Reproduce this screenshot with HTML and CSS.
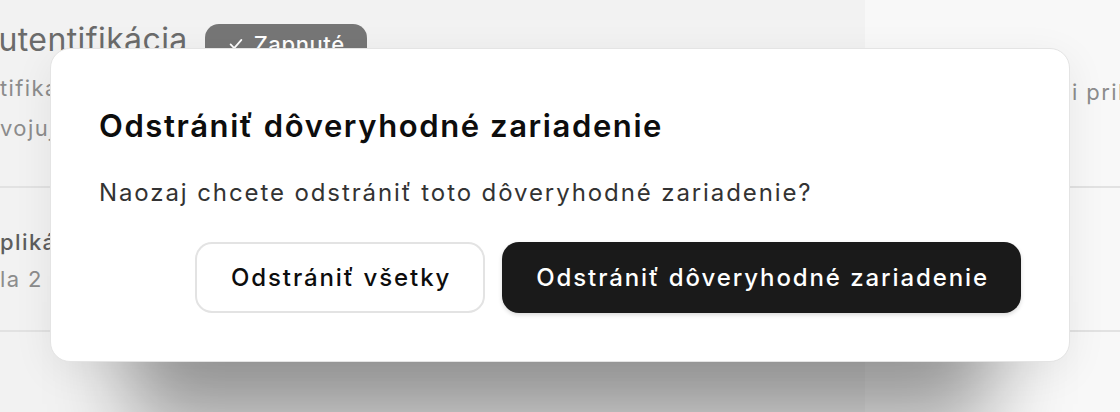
FILE: index.html
```html
<!DOCTYPE html>
<html lang="sk">
<head>
<meta charset="utf-8">
<title>Odstrániť dôveryhodné zariadenie</title>
<link rel="stylesheet" href="styles.css">
</head>
<body>
<div class="page">
  <div class="header">
    <h1 class="title">Autentifikácia</h1>
    <span class="badge"><svg class="check" viewBox="0 0 20 20" width="18" height="18"><path d="M4 10.5l4 4 8-9" fill="none" stroke="currentColor" stroke-width="2" stroke-linecap="round" stroke-linejoin="round"/></svg>Zapnuté</span>
  </div>
  <section class="row row-first">
    <p class="desc">tifikačná aplikácia vygeneruje jednorazový kód, ktorý zadáte pri<br>vojuj sa prihlásení do svojho účtu z nového zariadenia.</p>
    <p class="aside">i prihlásení</p>
  </section>
  <section class="row row-second">
    <p class="item-name">plikácia Authenticator</p>
    <p class="item-meta">la 2 dôveryhodné zariadenia</p>
  </section>
</div>

<div class="dialog" role="dialog" aria-modal="true">
  <h2 class="dialog-title">Odstrániť dôveryhodné zariadenie</h2>
  <p class="dialog-text">Naozaj chcete odstrániť toto dôveryhodné zariadenie?</p>
  <div class="actions">
    <button class="btn btn-outline">Odstrániť všetky</button>
    <button class="btn btn-dark">Odstrániť dôveryhodné zariadenie</button>
  </div>
</div>
</body>
</html>
```
FILE: styles.css
```css
* { box-sizing: border-box; }
html, body { height: 100%; }
body {
  margin: 0;
  overflow: hidden;
  position: relative;
  font-family: Inter, "Noto Sans", "Liberation Sans", sans-serif;
  background: linear-gradient(90deg, #f2f2f2 0, #f2f2f2 865px, #f8f8f8 865px);
  color: #111;
}
.page {
  padding-top: 24px;
  width: 1120px;
  letter-spacing: 1.4px;
}
.header {
  display: flex;
  align-items: flex-start;
  gap: 17px;
  height: 40px;
  margin-left: -24px;
}
.title {
  margin: 0;
  font-size: 32px;
  font-weight: 400;
  line-height: 40px;
  margin-top: -4px;
  letter-spacing: 0.4px;
  color: #6b6b6b;
}
.badge {
  display: inline-flex;
  align-items: center;
  gap: 9px;
  height: 40px;
  padding: 0 22px 0 22px;
  border-radius: 14px;
  background: #767676;
  color: #fff;
  font-size: 22px;
  font-weight: 500;
  letter-spacing: 0.6px;
}
.check { flex: none; }
.row p { margin: 0; }
.row-first {
  display: grid;
  grid-template-columns: 1072px 1fr;
  padding: 4px 0 38px;
  border-bottom: 2px solid #e2e2e2;
  font-size: 22px;
  line-height: 40px;
  color: #8c8c8c;
  white-space: nowrap;
}
.desc { overflow: hidden; }
.aside { padding-top: 4px; }
.row-second {
  padding: 36px 0 32px;
  border-bottom: 2px solid #e2e2e2;
  font-size: 22px;
  line-height: 37px;
  white-space: nowrap;
}
.item-name { color: #5e5e5e; font-weight: 500; }
.item-meta { color: #8c8c8c; }

.dialog {
  position: absolute;
  left: 50px;
  top: 48px;
  width: 1020px;
  padding: 59px 48px 48px;
  background: #fff;
  border: 1.5px solid #e4e4e4;
  border-radius: 20px;
  box-shadow: 0 148px 80px -80px rgba(0, 0, 0, 0.36), 0 10px 40px rgba(0, 0, 0, 0.07);
}
.dialog-title {
  margin: 0;
  font-size: 31px;
  font-weight: 600;
  line-height: 36px;
  letter-spacing: 1.6px;
  color: #0d0d0d;
}
.dialog-text {
  margin: 33px 0 0;
  font-size: 24px;
  line-height: 32px;
  letter-spacing: 1.9px;
  color: #333;
}
.actions {
  display: flex;
  justify-content: flex-end;
  gap: 17px;
  margin-top: 33px;
}
.btn {
  height: 71px;
  padding: 0 32px 0 34px;
  border-radius: 17px;
  font-family: inherit;
  font-size: 24px;
  font-weight: 500;
  letter-spacing: 1.9px;
  cursor: pointer;
}
.btn-outline {
  background: #fff;
  color: #0d0d0d;
  border: 2px solid #e3e3e3;
}
.btn-dark {
  background: #1a1a1a;
  color: #fff;
  border: none;
  box-shadow: 0 2px 4px rgba(0, 0, 0, 0.15);
}
```
